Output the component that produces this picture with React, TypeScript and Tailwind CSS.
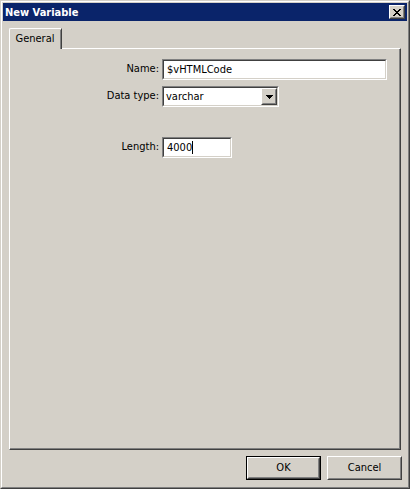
import React from 'react'

const FONT = { fontFamily: 'Tahoma, "DejaVu Sans Condensed", "Liberation Sans", sans-serif' }

// sunken 2px edge, like a win2k edit box
function Sunken({ className = '', children }: { className?: string; children?: React.ReactNode }) {
  return (
    <div className={`border border-t-[#808080] border-l-[#808080] border-b-white border-r-white ${className}`}>
      <div className="h-full border border-t-[#404040] border-l-[#404040] border-b-[#d4d0c8] border-r-[#d4d0c8] bg-white">
        {children}
      </div>
    </div>
  )
}

// raised edge for buttons
function Raised({ className = '', children }: { className?: string; children?: React.ReactNode }) {
  return (
    <div className={`border border-t-white border-l-white border-b-[#404040] border-r-[#404040] ${className}`}>
      <div className="h-full border border-t-[#d4d0c8] border-l-[#d4d0c8] border-b-[#808080] border-r-[#808080] bg-[#d4d0c8] flex items-center justify-center">
        {children}
      </div>
    </div>
  )
}

function CloseGlyph() {
  return (
    <svg width="8" height="7" viewBox="0 0 8 7" shapeRendering="crispEdges">
      <path d="M0 0h2v1H0zM6 0h2v1H6zM1 1h2v1H1zM5 1h2v1H5zM2 2h4v1H2zM3 3h2v1H3zM2 4h4v1H2zM1 5h2v1H1zM5 5h2v1H5zM0 6h2v1H0zM6 6h2v1H6z" fill="#000" />
    </svg>
  )
}

function DownArrow() {
  return (
    <svg width="7" height="4" viewBox="0 0 7 4" shapeRendering="crispEdges">
      <path d="M0 0h7v1H0zM1 1h5v1H1zM2 2h3v1H2zM3 3h1v1H3z" fill="#000" />
    </svg>
  )
}

function Field({ label, children }: { label: string; children: React.ReactNode }) {
  return (
    <div className="flex items-center">
      <div className="w-[152px] pr-[3px] text-right">{label}</div>
      {children}
    </div>
  )
}

export default function App() {
  return (
    <div style={FONT} className="w-[410px] h-[489px] text-[11px] text-black select-none">
      <div className="h-full border border-t-[#d4d0c8] border-l-[#d4d0c8] border-b-[#404040] border-r-[#404040]">
        <div className="h-full border border-t-white border-l-white border-b-[#808080] border-r-[#808080] bg-[#d4d0c8] p-px flex flex-col">
          {/* title bar */}
          <div className="h-[18px] bg-[#0a246a] flex items-center pl-[2px] pr-[2px]">
            <span className="font-bold text-white text-[11px] leading-none flex-1">New Variable</span>
            <Raised className="w-[16px] h-[14px]">
              <CloseGlyph />
            </Raised>
          </div>

          <div className="flex-1 flex flex-col px-[6px] pt-[7px] pb-[6px]">
            {/* tab strip */}
            <div className="flex h-[20px] relative z-10">
              <div className="w-[53px] h-[21px] bg-[#d4d0c8] border-l border-t border-white border-r border-r-[#404040] rounded-tl-[2px] flex items-center justify-center pt-px">
                <div className="w-full h-full border-r border-[#808080] flex items-center justify-center">General</div>
              </div>
            </div>

            {/* panel */}
            <div className="flex-1 border border-t-white border-l-white border-b-[#404040] border-r-[#404040]">
              <div className="h-full border-r border-b border-[#808080] pt-[10px] flex flex-col">
                <Field label="Name:">
                  <Sunken className="w-[225px] h-[21px]">
                    <div className="pl-[3px] leading-[17px]">$vHTMLCode</div>
                  </Sunken>
                </Field>
                <div className="h-[6px]" />
                <Field label="Data type:">
                  <Sunken className="w-[117px] h-[21px]">
                    <div className="flex h-full">
                      <div className="flex-1 pl-[2px] leading-[17px]">varchar</div>
                      <Raised className="w-[16px] h-[17px]">
                        <DownArrow />
                      </Raised>
                    </div>
                  </Sunken>
                </Field>
                <div className="h-[30px]" />
                <Field label="Length:">
                  <Sunken className="w-[70px] h-[21px]">
                    <div className="pl-[3px] leading-[17px] flex items-center">
                      4000
                      <span className="inline-block w-px h-[13px] bg-black" />
                    </div>
                  </Sunken>
                </Field>
              </div>
            </div>

            {/* buttons */}
            <div className="flex justify-end gap-[6px] mt-[6px] -mr-px">
              <div className="w-[75px] h-[24px] border border-black">
                <Raised className="w-full h-full">OK</Raised>
              </div>
              <Raised className="w-[75px] h-[24px]">Cancel</Raised>
            </div>
          </div>
        </div>
      </div>
    </div>
  )
}
